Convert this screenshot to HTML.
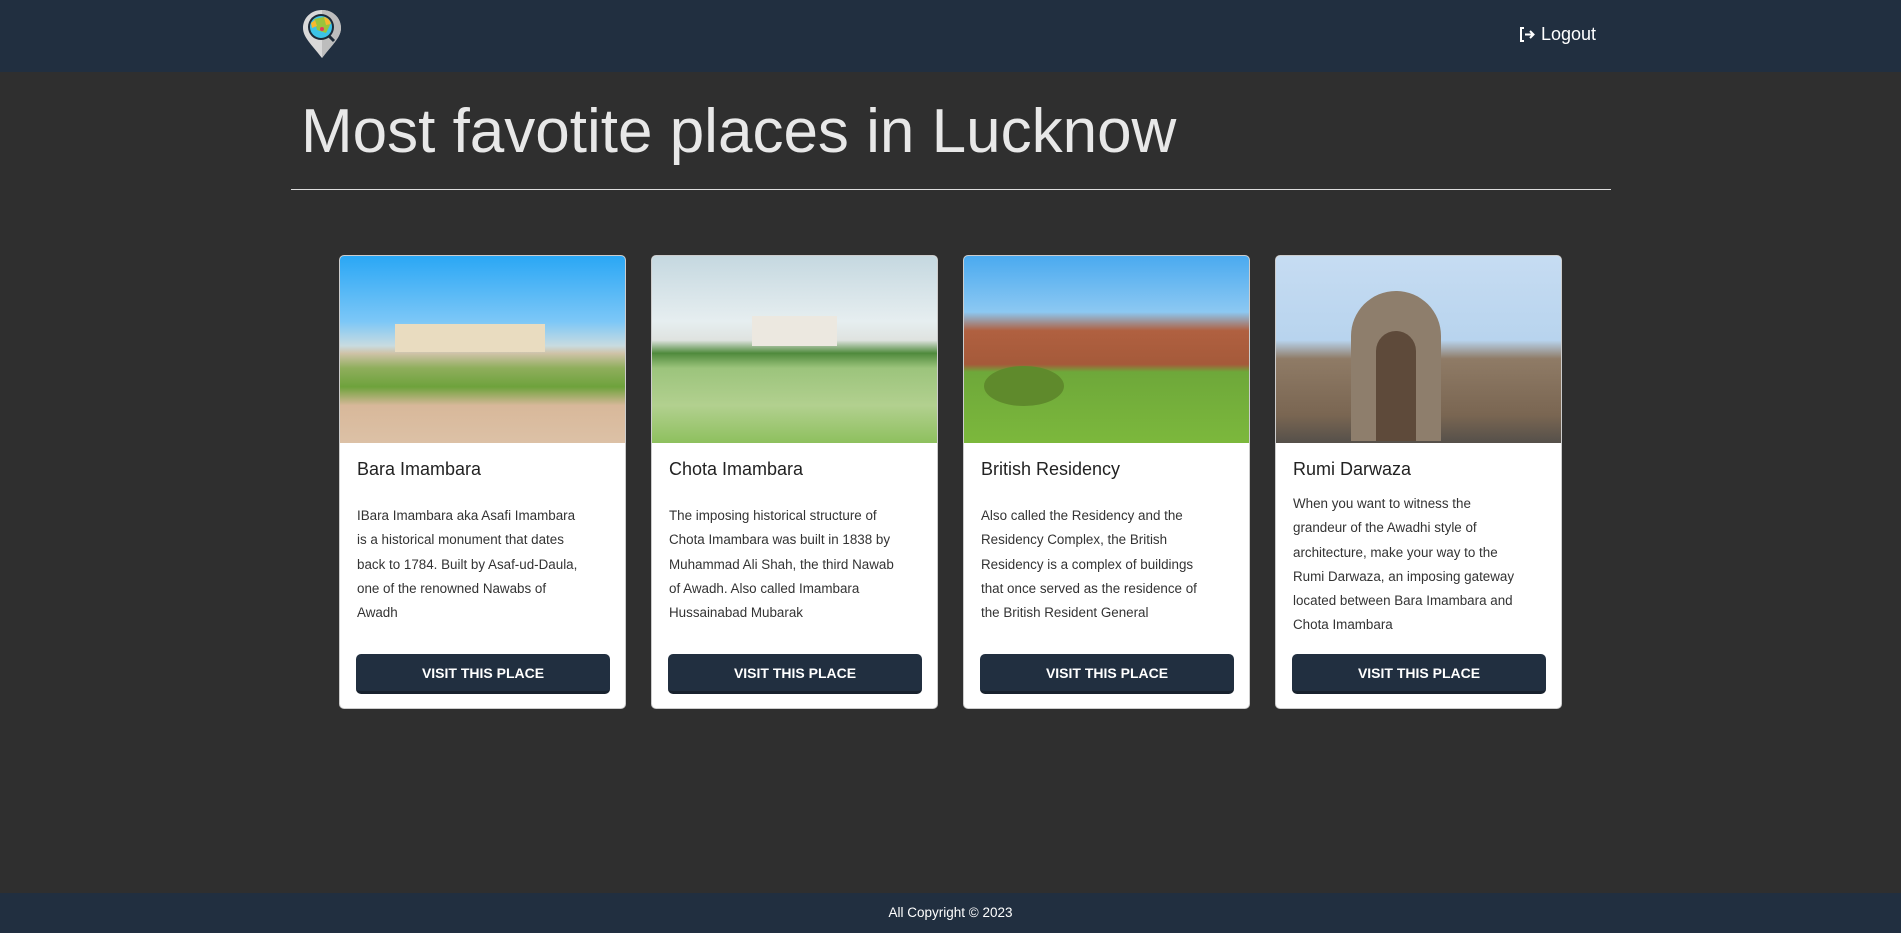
<!DOCTYPE html>
<html><head><meta charset="utf-8"><style>
*{box-sizing:border-box;margin:0;padding:0}
body{width:1901px;height:933px;background:#2f2f2f;font-family:"Liberation Sans",sans-serif;position:relative;overflow:hidden}
.nav{position:absolute;left:0;top:0;width:1901px;height:72px;background:#212f40}
.logo{position:absolute;left:302px;top:9px}
.logout{position:absolute;left:1518px;top:24px;color:#fff;font-size:18px;display:flex;align-items:center;gap:6px}
h1{position:absolute;left:301px;top:96px;color:#e8e8e8;font-weight:normal;font-size:62px;letter-spacing:0px}
.hr{position:absolute;left:291px;top:189px;width:1320px;height:1px;background:#ddd}
.card{position:absolute;top:255px;width:287px;height:454px;background:#fff;border-radius:5px;border:1px solid #ccc;overflow:hidden}
.img{height:187px;position:relative;overflow:hidden}
.ct{position:absolute;left:17px;top:203px;font-size:18px;color:#222}
.cd{position:absolute;left:17px;top:248px;font-size:13.4px;line-height:24.3px;color:#333;width:260px}
.btn{position:absolute;left:16px;top:398px;width:254px;height:40px;background:#212f40;border-bottom:3px solid #18222e;border-radius:5px;color:#fff;font-weight:bold;font-size:14px;text-align:center;line-height:38px}
.foot{position:absolute;left:0;top:893px;width:1901px;height:40px;background:#212f40;color:#fff;font-size:13.5px;text-align:center;line-height:40px}
</style></head><body>
<div class="nav">
<svg class="logo" width="40" height="50" viewBox="0 0 40 50"><path d="M20 1C9 1 1 9 1 19c0 9 8 16 19 30C31 35 39 28 39 19 39 9 31 1 20 1z" fill="#d9d9d9"/><path d="M20 1v48C31 35 39 28 39 19 39 9 31 1 20 1z" fill="#bdbdbd"/><circle cx="19" cy="18" r="13" fill="#1e2a38"/><circle cx="19" cy="18" r="11" fill="#3cc4e8"/><path d="M12 10l10-2 6 8-4 8-9-3z" fill="#9ac43c"/><path d="M22 8c4 1 6 3 7 7l-5 1z" fill="#f7b92d"/><path d="M9 14l4-3 2 6-5 2z" fill="#f7b92d"/><circle cx="20" cy="20" r="2" fill="#e43b5a"/><path d="M27 27l5 5" stroke="#1e2a38" stroke-width="3"/></svg>
<div class="logout"><svg width="17" height="17" viewBox="0 0 17 17" fill="none" stroke="#fff" stroke-width="2"><path d="M6 2H3v13h3"/><path d="M7 8.5h8M12 5l3.5 3.5L12 12"/></svg>Logout</div>
</div>
<h1>Most favotite places in Lucknow</h1>
<div class="hr"></div>

<div class="card" style="left:339px">
<div class="img" style="background:linear-gradient(#2aa7f5 0%,#7cc7f7 35%,#c8dbe0 48%,#cfc3a8 52%,#8fae5c 60%,#6ea23c 70%,#d8b89a 80%,#dcc1a6 100%)">
<div style="position:absolute;left:55px;top:68px;width:150px;height:28px;background:#e9dcc0"></div></div>
<div class="ct">Bara Imambara</div>
<div class="cd">IBara Imambara aka Asafi Imambara<br>is a historical monument that dates<br>back to 1784. Built by Asaf-ud-Daula,<br>one of the renowned Nawabs of<br>Awadh</div>
<div class="btn">VISIT THIS PLACE</div></div>

<div class="card" style="left:651px">
<div class="img" style="background:linear-gradient(#c5d8e0 0%,#e6eef0 35%,#dfe3e0 45%,#4f8a3c 52%,#9cc47c 60%,#b2d08f 80%,#8ec05e 100%)">
<div style="position:absolute;left:100px;top:60px;width:85px;height:30px;background:#ece8e0"></div></div>
<div class="ct">Chota Imambara</div>
<div class="cd">The imposing historical structure of<br>Chota Imambara was built in 1838 by<br>Muhammad Ali Shah, the third Nawab<br>of Awadh. Also called Imambara<br>Hussainabad Mubarak</div>
<div class="btn">VISIT THIS PLACE</div></div>

<div class="card" style="left:963px">
<div class="img" style="background:linear-gradient(#4aaaf0 0%,#8cc8f2 30%,#b06040 40%,#a55a3a 58%,#6ea83a 62%,#7cb83c 100%)">
<div style="position:absolute;left:20px;top:110px;width:80px;height:40px;border-radius:50%;background:#5f8a2c"></div></div>
<div class="ct">British Residency</div>
<div class="cd">Also called the Residency and the<br>Residency Complex, the British<br>Residency is a complex of buildings<br>that once served as the residence of<br>the British Resident General</div>
<div class="btn">VISIT THIS PLACE</div></div>

<div class="card" style="left:1275px">
<div class="img" style="background:linear-gradient(#c6dcf2 0%,#b8d4ee 45%,#8f7b66 55%,#7a6652 85%,#55504a 100%)">
<div style="position:absolute;left:75px;top:35px;width:90px;height:150px;border-radius:45px 45px 0 0;background:#8e7e6c"></div>
<div style="position:absolute;left:100px;top:75px;width:40px;height:110px;border-radius:20px 20px 0 0;background:#5e4a3a"></div></div>
<div class="ct">Rumi Darwaza</div>
<div class="cd" style="top:236px">When you want to witness the<br>grandeur of the Awadhi style of<br>architecture, make your way to the<br>Rumi Darwaza, an imposing gateway<br>located between Bara Imambara and<br>Chota Imambara</div>
<div class="btn">VISIT THIS PLACE</div></div>

<div class="foot">All Copyright © 2023</div>
</body></html>
